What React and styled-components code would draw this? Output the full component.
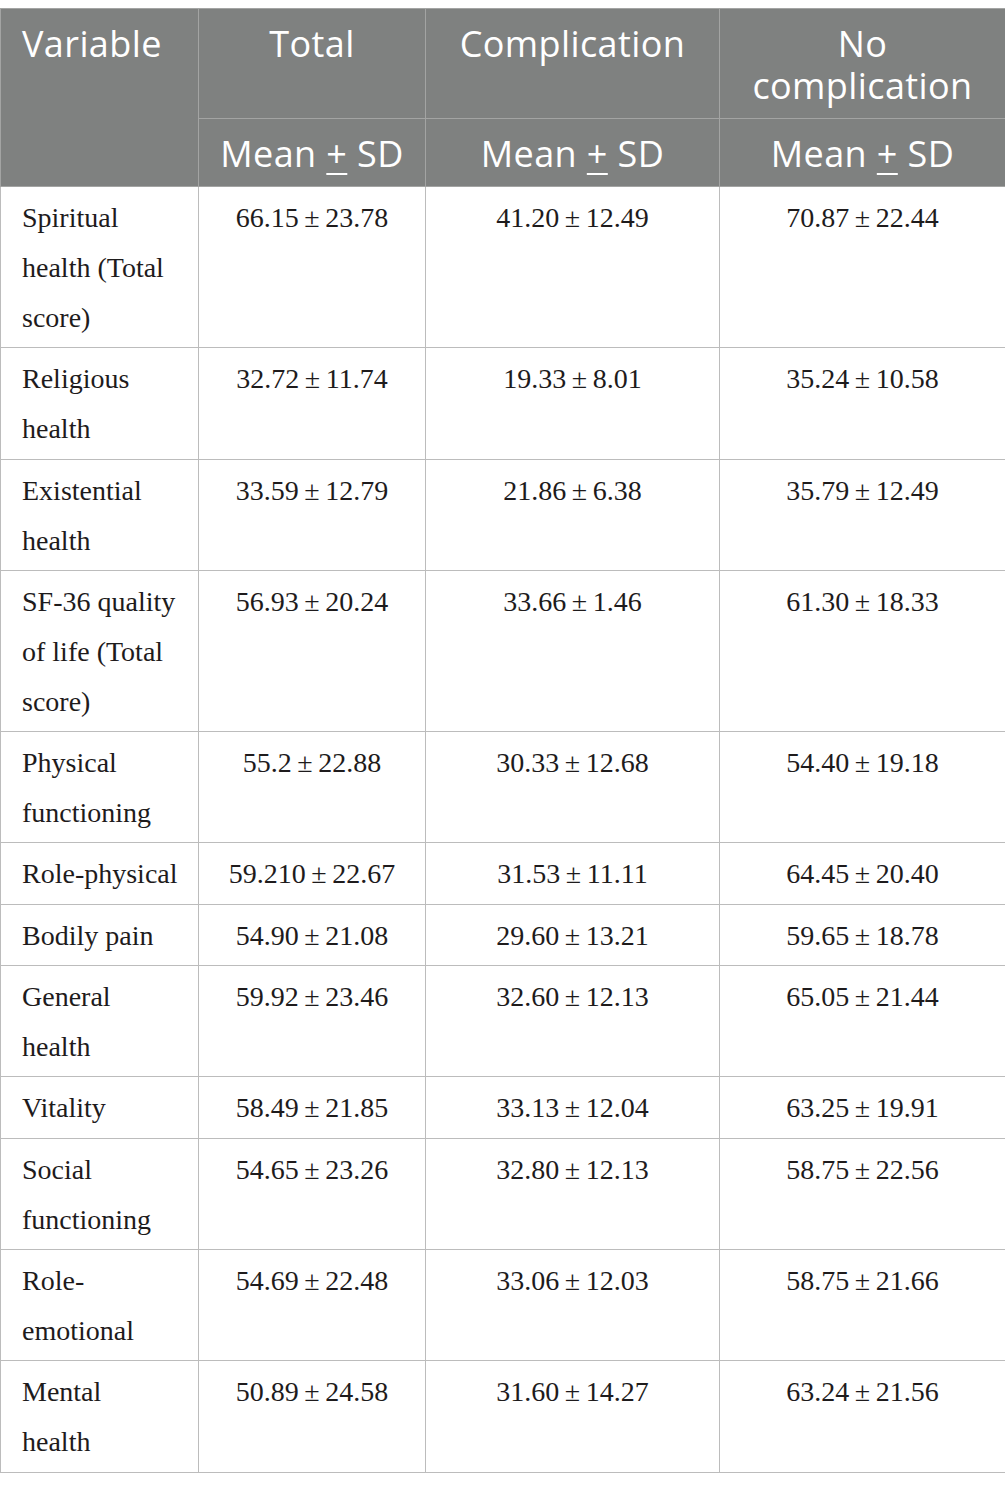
import styled, { createGlobalStyle } from "styled-components";

const GlobalStyle = createGlobalStyle`
  body {
    margin: 8px 0 0 0;
    background: #ffffff;
  }
`;

const Table = styled.table`
  width: 1005px;
  border-collapse: collapse;
  table-layout: fixed;
`;

const HeadCell = styled.th`
  background: #7f8180;
  color: #ffffff;
  font-family: "Open Sans", "Noto Sans", sans-serif;
  font-weight: 400;
  font-size: 36px;
  letter-spacing: 0.4px;
  line-height: 42px;
  padding: 14px 8px 11px;
  border: 1px solid #a3a4a3;
  text-align: ${({ $left }) => ($left ? "left" : "center")};
  padding-left: ${({ $left }) => ($left ? "21px" : "8px")};
  vertical-align: top;
`;

const Cell = styled.td`
  font-family: "Liberation Serif", "Times New Roman", serif;
  font-size: 28px;
  line-height: 50px;
  color: #1e1b1c;
  padding: 6px 8px 4.3px;
  border: 1px solid #bcbcbc;
  vertical-align: top;
  text-align: ${({ $left }) => ($left ? "left" : "center")};
  padding-left: ${({ $left }) => ($left ? "21px" : "8px")};
`;

const Line = styled.span`
  display: block;
`;

const Pm = styled.span`
  text-decoration: underline;
  text-decoration-thickness: 2px;
  text-underline-offset: 6px;
`;

const rows = [
  [["Spiritual", "health (Total", "score)"], "66.15", "23.78", "41.20", "12.49", "70.87", "22.44"],
  [["Religious", "health"], "32.72", "11.74", "19.33", "8.01", "35.24", "10.58"],
  [["Existential", "health"], "33.59", "12.79", "21.86", "6.38", "35.79", "12.49"],
  [["SF-36 quality", "of life (Total", "score)"], "56.93", "20.24", "33.66", "1.46", "61.30", "18.33"],
  [["Physical", "functioning"], "55.2", "22.88", "30.33", "12.68", "54.40", "19.18"],
  [["Role-physical"], "59.210", "22.67", "31.53", "11.11", "64.45", "20.40"],
  [["Bodily pain"], "54.90", "21.08", "29.60", "13.21", "59.65", "18.78"],
  [["General", "health"], "59.92", "23.46", "32.60", "12.13", "65.05", "21.44"],
  [["Vitality"], "58.49", "21.85", "33.13", "12.04", "63.25", "19.91"],
  [["Social", "functioning"], "54.65", "23.26", "32.80", "12.13", "58.75", "22.56"],
  [["Role-", "emotional"], "54.69", "22.48", "33.06", "12.03", "58.75", "21.66"],
  [["Mental", "health"], "50.89", "24.58", "31.60", "14.27", "63.24", "21.56"],
];

const MeanSd = () => (
  <>
    Mean <Pm>+</Pm> SD
  </>
);

const value = (m, sd) => `${m}\u2009±\u2009${sd}`;

export default function App() {
  return (
    <>
      <GlobalStyle />
      <Table>
        <colgroup>
          <col style={{ width: 198 }} />
          <col style={{ width: 227 }} />
          <col style={{ width: 294 }} />
          <col style={{ width: 286 }} />
        </colgroup>
        <thead>
          <tr>
            <HeadCell $left rowSpan={2}>Variable</HeadCell>
            <HeadCell>Total</HeadCell>
            <HeadCell>Complication</HeadCell>
            <HeadCell>
              <Line>No</Line>
              <Line>complication</Line>
            </HeadCell>
          </tr>
          <tr>
            <HeadCell><MeanSd /></HeadCell>
            <HeadCell><MeanSd /></HeadCell>
            <HeadCell><MeanSd /></HeadCell>
          </tr>
        </thead>
        <tbody>
          {rows.map(([label, a, b, c, d, e, f], i) => (
            <tr key={i}>
              <Cell $left>
                {label.map((line, j) => (
                  <Line key={j}>{line}</Line>
                ))}
              </Cell>
              <Cell>{value(a, b)}</Cell>
              <Cell>{value(c, d)}</Cell>
              <Cell>{value(e, f)}</Cell>
            </tr>
          ))}
        </tbody>
      </Table>
    </>
  );
}
